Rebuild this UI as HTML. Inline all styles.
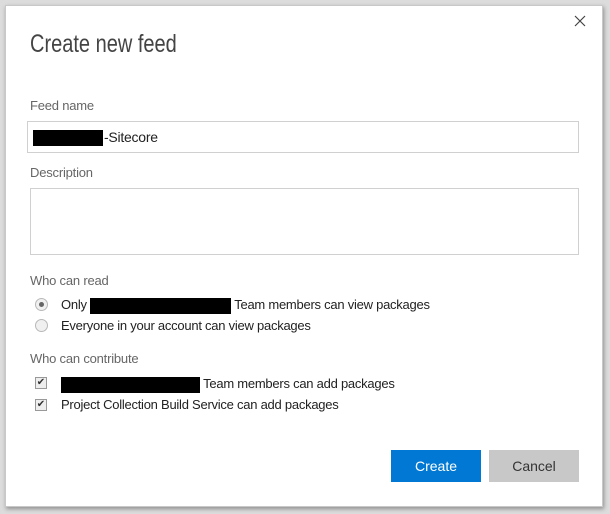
<!DOCTYPE html>
<html><head><style>
*{box-sizing:border-box;margin:0;padding:0}
body{width:610px;height:514px;background:#dcdcdc;font-family:"Liberation Sans",sans-serif;position:relative;overflow:hidden}
.dlg{position:absolute;left:5px;top:5px;width:598px;height:502px;background:#fff;border:1px solid #c8c8c8;box-shadow:1px 2px 4px rgba(0,0,0,.35)}
.a{position:absolute}
.lbl{font-size:13px;color:#666;letter-spacing:-0.2px}
.t{font-size:13px;color:#222;white-space:nowrap;letter-spacing:-0.25px}
.inp{position:absolute;border:1px solid #d0d0d0;background:#fff}
.blk{display:inline-block;background:#000;vertical-align:middle}
.radio{position:absolute;width:13px;height:13px;border-radius:50%;border:1px solid #b8b8b8;background:#f0f0f0}
.cb{position:absolute;width:12px;height:12px;border:1px solid #999;background:#eee;font-size:10px;line-height:10px;text-align:center;color:#333}
.btn{position:absolute;height:32px;width:90px;font-size:14px;text-align:center;line-height:32px}
</style></head><body>
<div class="dlg"></div>
<svg class="a" style="left:574px;top:15px" width="12" height="12"><path d="M1 1L11 11M11 1L1 11" stroke="#444" stroke-width="1.2"/></svg>
<div class="a" style="left:30px;top:30px;font-size:25px;color:#444;transform:scaleX(0.8);transform-origin:0 0;white-space:nowrap">Create new feed</div>
<div class="a lbl" style="left:30px;top:98px">Feed name</div>
<div class="inp" style="left:27px;top:121px;width:552px;height:32px"></div>
<div class="a t" style="left:33px;top:129px;font-size:14px"><span class="blk" style="width:70px;height:16px;margin-right:1px"></span>-Sitecore</div>
<div class="a lbl" style="left:30px;top:165px">Description</div>
<div class="inp" style="left:30px;top:188px;width:549px;height:67px"></div>
<div class="a lbl" style="left:30px;top:273px">Who can read</div>
<div class="radio" style="left:35px;top:298px"><div style="position:absolute;left:3px;top:3px;width:5px;height:5px;border-radius:50%;background:#666"></div></div>
<div class="a t" style="left:61px;top:297px">Only <span class="blk" style="width:141px;height:16px"></span> Team members can view packages</div>
<div class="radio" style="left:35px;top:319px"></div>
<div class="a t" style="left:61px;top:318px">Everyone in your account can view packages</div>
<div class="a lbl" style="left:30px;top:351px">Who can contribute</div>
<div class="cb" style="left:35px;top:377px">✔</div>
<div class="a t" style="left:61px;top:376px"><span class="blk" style="width:139px;height:16px"></span> Team members can add packages</div>
<div class="cb" style="left:35px;top:399px">✔</div>
<div class="a t" style="left:61px;top:397px">Project Collection Build Service can add packages</div>
<div class="btn" style="left:391px;top:450px;background:#0078d4;color:#fff">Create</div>
<div class="btn" style="left:489px;top:450px;background:#c8c8c8;color:#333">Cancel</div>
</body></html>
